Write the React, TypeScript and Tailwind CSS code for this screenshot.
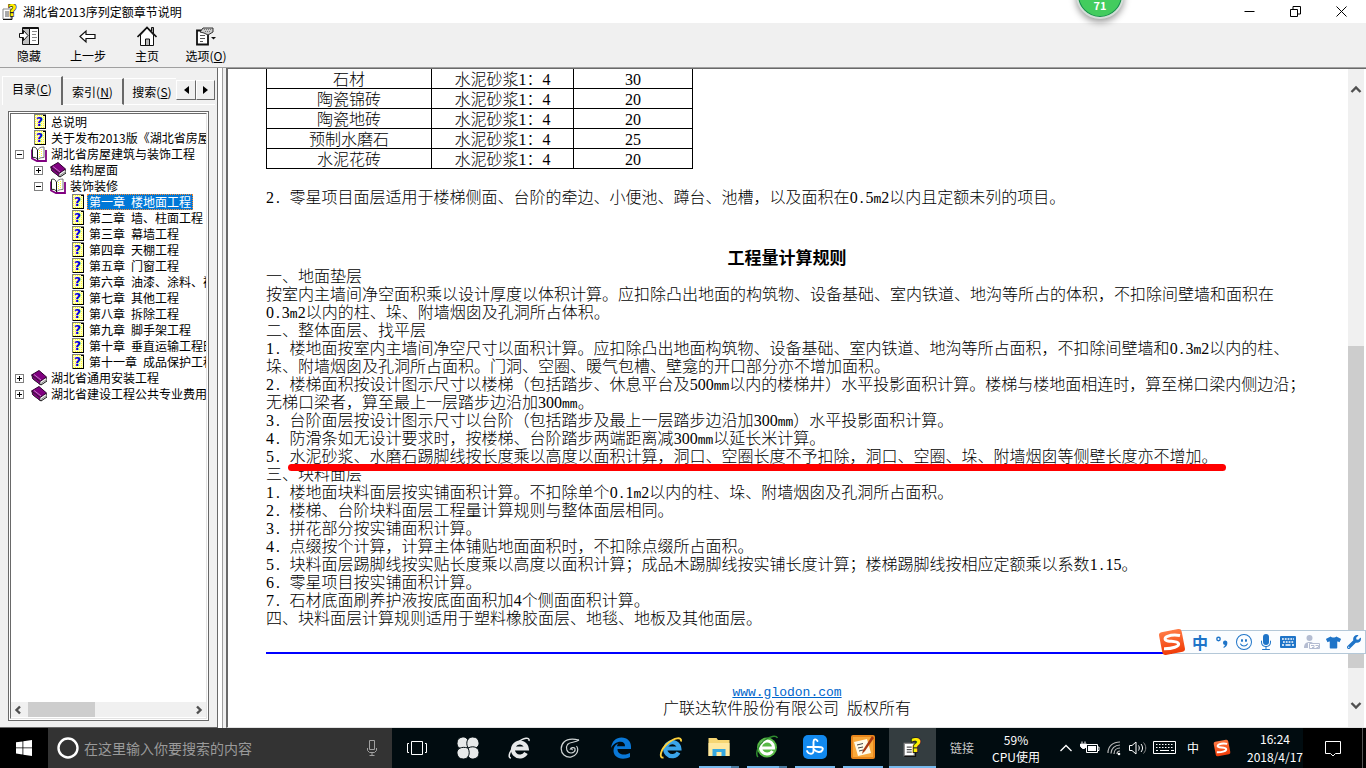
import { useState, type ReactNode } from "react";
import { BsMicFill, BsEmojiSmile } from "react-icons/bs";
import { FaTshirt, FaWrench } from "react-icons/fa";
import clsx from "clsx";

type TreeNode = { label: string; level: number; kind: "topic" | "open" | "closed" };

const tree: TreeNode[] = [
  { label: "总说明", level: 0, kind: "topic" },
  { label: "关于发布2013版《湖北省房屋", level: 0, kind: "topic" },
  { label: "湖北省房屋建筑与装饰工程", level: 0, kind: "open" },
  { label: "结构屋面", level: 1, kind: "closed" },
  { label: "装饰装修", level: 1, kind: "open" },
  { label: "第一章 楼地面工程", level: 2, kind: "topic" },
  { label: "第二章 墙、柱面工程", level: 2, kind: "topic" },
  { label: "第三章 幕墙工程", level: 2, kind: "topic" },
  { label: "第四章 天棚工程", level: 2, kind: "topic" },
  { label: "第五章 门窗工程", level: 2, kind: "topic" },
  { label: "第六章 油漆、涂料、裱", level: 2, kind: "topic" },
  { label: "第七章 其他工程", level: 2, kind: "topic" },
  { label: "第八章 拆除工程", level: 2, kind: "topic" },
  { label: "第九章 脚手架工程", level: 2, kind: "topic" },
  { label: "第十章 垂直运输工程田", level: 2, kind: "topic" },
  { label: "第十一章 成品保护工程", level: 2, kind: "topic" },
  { label: "湖北省通用安装工程", level: 0, kind: "closed" },
  { label: "湖北省建设工程公共专业费用", level: 0, kind: "closed" },
];

const materials = [
  ["石材", "水泥砂浆1：4", "30"],
  ["陶瓷锦砖", "水泥砂浆1：4", "20"],
  ["陶瓷地砖", "水泥砂浆1：4", "20"],
  ["预制水磨石", "水泥砂浆1：4", "25"],
  ["水泥花砖", "水泥砂浆1：4", "20"],
];

const rules = [
  "一、地面垫层",
  "按室内主墙间净空面积乘以设计厚度以体积计算。应扣除凸出地面的构筑物、设备基础、室内铁道、地沟等所占的体积，不扣除间壁墙和面积在\n0.3m2以内的柱、垛、附墙烟囱及孔洞所占体积。",
  "二、整体面层、找平层",
  "1. 楼地面按室内主墙间净空尺寸以面积计算。应扣除凸出地面构筑物、设备基础、室内铁道、地沟等所占面积，不扣除间壁墙和0.3m2以内的柱、\n垛、附墙烟囱及孔洞所占面积。门洞、空圈、暖气包槽、壁龛的开口部分亦不增加面积。",
  "2. 楼梯面积按设计图示尺寸以楼梯（包括踏步、休息平台及500mm以内的楼梯井）水平投影面积计算。楼梯与楼地面相连时，算至梯口梁内侧边沿；\n无梯口梁者，算至最上一层踏步边沿加300mm。",
  "3. 台阶面层按设计图示尺寸以台阶（包括踏步及最上一层踏步边沿加300mm）水平投影面积计算。",
  "4. 防滑条如无设计要求时，按楼梯、台阶踏步两端距离减300mm以延长米计算。",
  "5. *水泥砂浆、水磨石踢脚线按长度乘以高度以面积计算，洞口、空圈长度不予扣除，洞口、空圈、垛、附墙烟囱等侧壁长度亦不增加。",
  "三、块料面层",
  "1. 楼地面块料面层按实铺面积计算。不扣除单个0.1m2以内的柱、垛、附墙烟囱及孔洞所占面积。",
  "2. 楼梯、台阶块料面层工程量计算规则与整体面层相同。",
  "3. 拼花部分按实铺面积计算。",
  "4. 点缀按个计算，计算主体铺贴地面面积时，不扣除点缀所占面积。",
  "5. 块料面层踢脚线按实贴长度乘以高度以面积计算；成品木踢脚线按实铺长度计算；楼梯踢脚线按相应定额乘以系数1.15。",
  "6. 零星项目按实铺面积计算。",
  "7. 石材底面刷养护液按底面面积加4个侧面面积计算。",
  "四、块料面层计算规则适用于塑料橡胶面层、地毯、地板及其他面层。",
];

// Digits and latin letters take half the width of a Chinese character
function Mixed({ text }: { text: string }) {
  return (
    <>
      {text.split(/(\d+|[ .a-z]+)/).map((part, i) => {
        if (/^\d/.test(part)) return <span key={i} className="font-['Liberation_Serif',serif] leading-[0]">{part}</span>;
        if (/^[ .a-z]/.test(part)) return <span key={i} className="whitespace-pre font-['Liberation_Mono',monospace] text-[13px] leading-[0]">{part}</span>;
        return part;
      })}
    </>
  );
}

function Rule({ text }: { text: string }) {
  const [lead, marked] = text.split("*");
  return (
    <p className="whitespace-pre">
      <Mixed text={lead} />
      {marked && (
        <span className="relative">
          <Mixed text={marked} />
          <span className="absolute -left-0.5 -right-2 top-[21px] z-10 h-[7px] rounded-full bg-[#ff0000]" />
        </span>
      )}
    </p>
  );
}

function HelpIcon({ className }: { className?: string }) {
  return (
    <svg viewBox="0 0 16 16" className={className}>
      <path d="M1 5h8v10H1z" fill="#fff" stroke="#888" />
      <path d="M3 8h4M3 10h4M3 12h4" stroke="#555" />
      <path d="M1 15.5h9V6" fill="none" stroke="#111" />
      <text x="6" y="12" fontSize="15" fontWeight="900" fontFamily="DejaVu Sans" fill="#ffee00" stroke="#222" strokeWidth="1.4" paintOrder="stroke">?</text>
    </svg>
  );
}

function TopicIcon() {
  return (
    <svg width="13" height="16" viewBox="0 0 13 16" shapeRendering="crispEdges" className="shrink-0">
      <rect width="12" height="15" fill="#808080" />
      <rect x="1" y="1" width="10" height="13" fill="#ffffc0" />
      <path d="M1.500 1v13M3.500 1v13M5.500 1v13M7.500 1v13M9.500 1v13" stroke="#ffff22" strokeDasharray="1 1" />
      <path d="M11.500 3v12M1 14.500h11M9 1.500h2v2" stroke="#000" fill="none" />
      <text x="2" y="12" fontSize="12" fontWeight="700" fontFamily="DejaVu Sans" fill="#0000e0">?</text>
    </svg>
  );
}

function BookIcon({ open }: { open: boolean }) {
  return open ? (
    <svg width="16" height="16" viewBox="0 0 16 16" className="shrink-0">
      <path d="M1 3.500v9l5 2.500h9V4" fill="none" stroke="#800080" strokeWidth="1.800" />
      <path d="M1.500 1.500c2-1 4 0 5 3v9c-1-2-3-2.500-5-2z" fill="#fff" stroke="#222" />
      <path d="M6.500 4.500c1-2.500 3-3.500 6.500-3.500v10.500c-3 0-5.500.5-6.500 2.500z" fill="#fff" stroke="#777" />
      <path d="M8.500 4v8M10.500 3v8" stroke="#ffff33" strokeDasharray="1 1" />
      <path d="M6.500 4v10" stroke="#111" />
    </svg>
  ) : (
    <svg width="16" height="16" viewBox="0 0 16 16" className="shrink-0">
      <path d="M1 5l1 4 8 6 6-4V8z" fill="#eee" stroke="#111" />
      <path d="M.5 5L8 .5 15.500 7 9 11.500z" fill="#800080" stroke="#300030" />
      <path d="M1 5.500l.5 3 7.500 6v-3z" fill="#800080" stroke="#222" strokeWidth=".6" />
      <path d="M3 4.500L10 10" stroke="#d8a0d8" strokeWidth=".8" />
      <path d="M10 13.500l5-3.500" stroke="#888" />
    </svg>
  );
}

function Expander({ open }: { open: boolean }) {
  return (
    <svg width="9" height="9" viewBox="0 0 9 9" shapeRendering="crispEdges" className="shrink-0">
      <rect x=".5" y=".5" width="8" height="8" fill="#fff" stroke="#808080" />
      <path d={open ? "M2 4.500h5" : "M2 4.500h5M4.500 2v5"} stroke="#000" />
    </svg>
  );
}

function Arrow({ d }: { d: string }) {
  return (
    <svg width="12" height="12" viewBox="0 0 12 12" fill="none" stroke="#505050" strokeWidth="2.4">
      <path d={d} />
    </svg>
  );
}

function SogouLogo({ className }: { className?: string }) {
  return (
    <svg viewBox="0 0 28 28" className={className}>
      <defs>
        <linearGradient id="sogou" x1="0" y1="0" x2="0" y2="1">
          <stop offset="0" stopColor="#ff7a45" />
          <stop offset="1" stopColor="#f03c08" />
        </linearGradient>
      </defs>
      <rect x="2.500" y="2.500" width="23" height="23" rx="3" fill="url(#sogou)" transform="rotate(-11 14 14)" />
      <path d="M22 7.500c-4-.8-9-.6-12.500.8-3.500 1.500-3 4 .5 4.600 4 .6 9.500.2 10.500 2.600 1 3-6 5.300-14.500 5.200" fill="none" stroke="#fff" strokeWidth="3" />
    </svg>
  );
}

const toolbarIcons: { label: ReactNode; icon: ReactNode }[] = [
  {
    label: "隐藏",
    icon: (
      <>
        <path d="M3.500 1.500h16v17h-16z" fill="#fff" stroke="#111" />
        <path d="M4 2h6v16H4z" fill="#c0c0c0" />
        <path d="M10.500 2v16M4 2.500h15" stroke="#111" />
        <path d="M13 5.500h5M13 8.500h4M13 11.500h5M13 14.500h4" stroke="#888" />
        <path d="M.5 7.500h4V4.500l4.500 5-4.500 5v-3h-4z" fill="#fff" stroke="#111" />
      </>
    ),
  },
  { label: "上一步", icon: <path d="M2 10.500l6-5.500v3.500h9v4H8V16z" fill="#fff" stroke="#111" strokeWidth="1.200" /> },
  {
    label: "主页",
    icon: (
      <>
        <path d="M3.500 9v10.500h13V9L10 2z" fill="#fff" stroke="#111" />
        <path d="M.5 11L10 1.500l9.500 9.500" fill="none" stroke="#111" strokeWidth="1.600" />
        <path d="M14.500 5V1.500h2V7" fill="#999" stroke="#111" />
        <path d="M8.500 19v-6h4v6" fill="#bbb" stroke="#111" />
      </>
    ),
  },
  {
    label: <>选项(<u>O</u>)</>,
    icon: (
      <>
        <path d="M1 4.500h11v14H1z" fill="#fff" stroke="#111" strokeWidth="1.800" />
        <path d="M4 9.500h5M4 12.500h5M4 15.500h3" stroke="#555" />
        <path d="M4 6l3-4h10v4l-5 3-4-2z" fill="#ccc" stroke="#333" />
        <path d="M8 3.500h7M9 5.500h5" stroke="#777" strokeDasharray="1 1" />
        <path d="M15 11h5l-2.500 2.500z" fill="#111" />
      </>
    ),
  },
];

function Toolbar() {
  return (
    <div className="flex h-[45px] shrink-0 border-b border-[#a0a0a0] bg-[#f0f0f0]">
      {toolbarIcons.map((t, i) => (
        <button key={i} className="flex w-[59px] flex-col items-center gap-0.5 pr-px pt-[3px] text-xs leading-4">
          <svg width="20" height="20" viewBox="0 0 20 20">{t.icon}</svg>
          <span>{t.label}</span>
        </button>
      ))}
    </div>
  );
}

function Sidebar() {
  const [selected, setSelected] = useState("第一章 楼地面工程");
  return (
    <aside className="flex w-[218px] shrink-0 flex-col border-b border-r border-[#696969] bg-[#f0f0f0] px-0.5 pt-2 text-xs">
      <div role="tablist" className="flex h-[29px] shrink-0 items-end overflow-hidden">
        <button role="tab" aria-selected="true" className="h-[29px] w-[61px] border-l border-r-2 border-t border-l-white border-r-[#696969] border-t-white pb-1">目录(<u>C</u>)</button>
        <button role="tab" className="h-[27px] w-[61px] border-b border-r-2 border-t border-b-white border-r-[#696969] border-t-white">索引(<u>N</u>)</button>
        <button role="tab" className="h-[27px] w-[52px] whitespace-nowrap border-b border-t border-white pl-1">搜索(<u>S</u>)</button>
        <div className="flex h-[25px] grow border-b border-white">
          {["M11 3v8l-5-4z", "M6 3v8l5-4z"].map((d, i) => (
            <button key={d} aria-label={i ? "下一个" : "上一个"} className="h-5 grow border-b border-l border-r border-t border-b-[#696969] border-l-white border-r-[#696969] border-t-white">
              <svg width="16" height="14" viewBox="0 0 16 14" className="mx-auto"><path d={d} fill="#000" /></svg>
            </button>
          ))}
        </div>
      </div>
      <div className="mx-1.5 my-1.5 flex min-h-0 grow flex-col border border-[#696969] bg-white p-px">
        <div className="flex min-h-0 grow flex-col border border-b-[#e3e3e3] border-l-[#696969] border-r-[#e3e3e3] border-t-[#696969]">
          <ul className="grow overflow-hidden text-xs leading-4">
            {tree.map((n) => (
              <li key={n.label} className={clsx("flex h-4 items-center", n.level === 0 && "pl-1", n.level === 1 && "pl-[23px]", n.level === 2 && "pl-[42px]")}>
                <span className="flex w-3.5 shrink-0">{n.kind !== "topic" && <Expander open={n.kind === "open"} />}</span>
                <button onClick={() => setSelected(n.label)} className="flex items-center whitespace-nowrap">
                  <span className={clsx("flex w-5", n.kind === "topic" ? "pl-[5px]" : "pl-0.5")}>
                    {n.kind === "topic" ? <TopicIcon /> : <BookIcon open={n.kind === "open"} />}
                  </span>
                  <span className={clsx("h-4 border border-dotted px-px leading-[14px]", selected === n.label ? "border-[#ff8728] bg-[#0078d7] text-white" : "border-transparent")}>
                    {n.label.split(" ").map((part, i) => <span key={part} className={clsx(i > 0 && "ml-1.5")}>{part}</span>)}
                  </span>
                </button>
              </li>
            ))}
          </ul>
          <div className="mb-px flex h-[15px] shrink-0 items-center gap-0.5 bg-[#f0f0f0] px-px">
            <Arrow d="M8 2.500L4.500 6 8 9.500" />
            <span className="ml-0.5 h-[15px] w-[67px] bg-[#cdcdcd]" />
            <span className="ml-auto"><Arrow d="M4 2.500L7.500 6 4 9.500" /></span>
          </div>
        </div>
      </div>
    </aside>
  );
}

function Document() {
  return (
    <div className="flex min-w-0 grow border-b border-l-2 border-t border-b-[#e3e3e3] border-l-[#696969] border-t-[#696969] bg-white">
      <main className="min-w-0 grow overflow-hidden pl-[38px] pr-10 text-base leading-[18px] text-black">
        <table className="-mt-px table-fixed border-collapse text-center font-light">
          <colgroup>
            <col className="w-[165px]" />
            <col className="w-[142px]" />
            <col className="w-[119px]" />
          </colgroup>
          <tbody>
            {materials.map((row) => (
              <tr key={row[0]} className="h-5">
                {row.map((cell, i) => (
                  <td key={i} className="border border-t-0 border-black p-0"><Mixed text={cell} /></td>
                ))}
              </tr>
            ))}
          </tbody>
        </table>
        <p className="mt-[18px] whitespace-nowrap font-light">
          <Mixed text="2. 零星项目面层适用于楼梯侧面、台阶的牵边、小便池、蹲台、池槽，以及面积在0.5m2以内且定额未列的项目。" />
        </p>
        <h2 className="mt-[43px] text-center text-[17px] font-bold leading-[18px]">工程量计算规则</h2>
        <div className="font-light">
          {rules.map((r) => <Rule key={r} text={r} />)}
        </div>
        <hr className="mt-[26px] border-t-2 border-[#0000ff]" />
        <footer className="mt-[26px] text-center font-light">
          <a href="http://www.glodon.com" className="block text-[#0066cc] underline"><Mixed text="www.glodon.com" /></a>
          <p><Mixed text="广联达软件股份有限公司 版权所有" /></p>
        </footer>
      </main>
      <div className="mr-0.5 flex w-4 shrink-0 flex-col items-center bg-[#f0f0f0] pb-4 pt-[15px]">
        <Arrow d="M1.500 8L6 3.500 10.500 8" />
        <span className="grow-[250] basis-0" />
        <span className="w-4 grow-[321] basis-0 bg-[#cdcdcd]" />
        <span className="grow-[31] basis-0" />
        <Arrow d="M1.500 4L6 8.500 10.500 4" />
      </div>
    </div>
  );
}

function ImeBar() {
  return (
    <div className="absolute bottom-[112px] right-0 z-20 flex items-center">
      <SogouLogo className="z-10 -mr-3.5 size-7" />
      <div className="flex h-6 items-center border border-[#b4c8d8] bg-[#fbfdff] pl-4 text-[#1e74c8]">
        <span className="flex w-[22px] justify-center text-base font-bold leading-5">中</span>
        <span className="flex w-[22px] justify-center">
          <svg width="14" height="14" viewBox="0 0 14 14"><circle cx="3.500" cy="4" r="1.700" fill="none" stroke="currentColor" strokeWidth="1.400" /><path d="M8 7.500a2.200 2.200 0 1 1 4.400.3c0 2.500-1.200 4.200-3.600 5.200l-.4-1c1-.6 1.500-1.300 1.600-2A2.200 2.200 0 0 1 8 7.500z" fill="currentColor" /></svg>
        </span>
        <span className="flex w-[22px] justify-center"><BsEmojiSmile size={16} /></span>
        <span className="flex w-[22px] justify-center"><BsMicFill size={16} /></span>
        <span className="flex w-[22px] justify-center">
          <svg width="16" height="12" viewBox="0 0 16 12"><rect width="16" height="12" rx="1" fill="currentColor" /><path d="M2 3h12M3 6h11" stroke="#fff" strokeWidth="1.500" strokeDasharray="1.800 1" /><path d="M2 9h2M5.500 9h5M12 9h2" stroke="#fff" strokeWidth="1.500" /></svg>
        </span>
        <span className="flex w-[25px] justify-center">
          <svg width="18" height="16" viewBox="0 0 18 16" fill="#b4bdd2"><circle cx="6.500" cy="4" r="3" /><path d="M1 14c0-4 2-6 5.500-6 2 0 3 .5 3.500 1H5v5z" /><path d="M6.500 9.500h10v5h-10zM8 11.500h3v2H9M12.500 11.500h3v2h-2" fill="#fff" stroke="#b4bdd2" /></svg>
        </span>
        <span className="flex w-[18px] justify-center"><FaTshirt size={15} /></span>
        <span className="flex w-[23px] justify-center"><FaWrench size={14} /></span>
      </div>
    </div>
  );
}

const pinned: { name: string; icon: ReactNode }[] = [
  { name: "任务视图", icon: <path d="M6.500 5.500h11v13h-11zM4 7.500H2.500v9H4M20 7.500h1.500v9H20" fill="none" stroke="#fff" /> },
  {
    name: "四叶草",
    icon: (
      <g fill="#e8eaea" stroke="#020c10">
        <path d="M12 12C6 15 1 12 1 7.500S4 1 7.500 1 14 5 12 12z" />
        <path d="M12 12C9 6 12 1 16.500 1S23 4 23 7.500 19 14 12 12z" />
        <path d="M12 12c6-3 11 0 11 4.500S20 23 16.500 23 10 19 12 12z" />
        <path d="M12 12c3 6 0 11-4.500 11S1 20 1 16.500 5 10 12 12z" />
      </g>
    ),
  },
  {
    name: "浏览器",
    icon: (
      <g fill="none" stroke="#e8eaea">
        <path d="M19 17a7 7 0 1 1 .8-4.500H8" strokeWidth="4" />
        <path d="M4 22c-4 0-1-9 6-15S23 1 22 5" strokeWidth="1.500" />
      </g>
    ),
  },
  {
    name: "搜狗浏览器",
    icon: (
      <g fill="none" stroke="#cfd4d4" strokeWidth="1.200">
        <path d="M21 4c-4 3-9 1.500-11.500 4.500C7 12 9 17 13 17c3 0 4.500-2 4-4.500-1-1.500-4-1-4.500.5 1.500-.5 2 .5 1.500 1.200" />
        <path d="M21 4C15 2.500 9 3 6 6c-4 4-3.500 10 0 13 4 3.500 10 2.500 12.500-1.500 1.500-2.500 1.500-5.500 0-7.500" />
      </g>
    ),
  },
  {
    name: "Edge",
    icon: <path d="M2 12C3 5 7 1.500 12.500 1.500c6 0 9.500 4 9.500 9V13H8.500c0 4 3 5.500 6.500 5.500 2.500 0 4.500-.7 6-1.500v4c-2 1.200-4.500 1.700-7 1.700-6 0-9.500-3.500-9.500-8.200 0-3.500 2-6 5-7.200-1 1-1.500 2-1.500 3h8c0-3-1.500-4.500-4.500-4.500C7.500 5.800 4 8.500 2 12z" fill="#0a78d7" />,
  },
  {
    name: "Internet Explorer",
    icon: (
      <g fill="none">
        <path d="M19.500 16.500a7 7 0 1 1 .8-4H8" stroke="#3aa5ea" strokeWidth="4.200" />
        <path d="M4.500 21.500c-5 1-3-8 4-14S23 .5 22 5.500" stroke="#ffd23c" strokeWidth="1.900" />
      </g>
    ),
  },
];

const running: { name: string; icon: ReactNode }[] = [
  {
    name: "文件资源管理器",
    icon: (
      <>
        <path d="M1.500 3h8l1.500 2h11.500v16h-21z" fill="#f6d673" />
        <path d="M1.500 8h21v13h-21z" fill="#ffe9a0" />
        <path d="M5.500 21v-7h13v7h-4v-4h-5v4z" fill="#35a8e0" />
      </>
    ),
  },
  {
    name: "360浏览器",
    icon: (
      <>
        <circle cx="12" cy="12.500" r="10" fill="#58b947" />
        <path d="M17.500 16a6.500 6.500 0 1 1 1-3H6" fill="none" stroke="#fff" strokeWidth="3" />
        <path d="M3 22C0 19 3 10 9 5.500S21 0 22.500 3" fill="none" stroke="#2e8b2e" strokeWidth="1.500" />
      </>
    ),
  },
  {
    name: "广联达",
    icon: (
      <>
        <rect width="24" height="24" rx="5" fill="#1289ee" />
        <path d="M14.500 6c-1.500-2.500-4-2-4 1v9c0 4-5 3.500-6.500 0M4.500 12h11c4 0 5 1 4 3-1.500 3-6 2.500-9-1" fill="none" stroke="#fff" strokeWidth="1.900" strokeLinecap="round" />
      </>
    ),
  },
  {
    name: "笔记",
    icon: (
      <>
        <rect width="24" height="24" rx="2" fill="#e8861b" />
        <path d="M2 2h20v20H2z" fill="#f9a93a" />
        <path d="M3 7l13-3 4 14-13 3z" fill="#fffbe8" />
        <path d="M6 10l6-1.500M7 13l5-1M8 16l4-1" stroke="#444" />
        <path d="M21 1L12 15l-1 4 3-3 9-13z" fill="#a83a12" />
      </>
    ),
  },
];

function Taskbar() {
  return (
    <footer className="flex h-10 shrink-0 items-stretch bg-[#010c10] text-xs text-white">
      <button aria-label="开始" className="flex w-12 shrink-0 items-center justify-center bg-black">
        <svg width="16" height="16" viewBox="0 0 16 16" fill="#fff"><path d="M0 2.300L6.500 1.400v6.100H0zM7.300 1.300L16 0v7.500H7.300zM0 8.300h6.500v6.200L0 13.600zM7.300 8.300H16V16l-8.700-1.300z" /></svg>
      </button>
      <label className="flex w-[344px] shrink-0 items-center bg-[#333333] pl-2 pr-3">
        <svg width="24" height="24" viewBox="0 0 24 24"><circle cx="12" cy="12" r="9.500" fill="none" stroke="#fff" strokeWidth="2.400" /></svg>
        <input aria-label="搜索" placeholder="在这里输入你要搜索的内容" className="ml-1 min-w-0 grow bg-transparent text-sm outline-none placeholder:text-[#9a9a9a]" />
        <svg width="16" height="18" viewBox="0 0 16 18" fill="none" stroke="#a0a0a0" className="shrink-0"><path d="M5.500 1.500h5v9h-5zM3.500 9v2.500l2 2h5l2-2V9M8 13.500v3M5.500 16.500h5" /></svg>
      </label>
      {pinned.map((p, i) => (
        <button key={p.name} aria-label={p.name} className={clsx("flex shrink-0 items-center justify-center", i === 5 ? "w-12" : "w-[51px] pr-0.5")}>
          <svg width="24" height="24" viewBox="0 0 24 24">{p.icon}</svg>
        </button>
      ))}
      {running.map((p, i) => (
        <button key={p.name} aria-label={p.name} className="flex w-12 shrink-0 flex-col items-center">
          <svg width="24" height="24" viewBox="0 0 24 24" className="my-auto">{p.icon}</svg>
          <span className={clsx("h-0.5 w-10 bg-[#76b9ed]", i < 2 && "border-r-8 border-[#4a7ba0]")} />
        </button>
      ))}
      <button aria-label="帮助" className="ml-0.5 flex w-[47px] shrink-0 flex-col items-center border-b-2 border-[#76b9ed] bg-[#343d40]">
        <HelpIcon className="my-auto size-5" />
      </button>
      <div className="flex grow items-center justify-end">
        <span className="mr-[18px] text-[#c8c8c8]">链接</span>
        <div className="mr-4 text-center leading-[17px]">59%<br />CPU使用</div>
        <svg width="20" height="16" viewBox="0 0 20 16" fill="none" stroke="#fff" strokeWidth="1.300"><path d="M4.500 11L10 5.500l5.500 5.500" /></svg>
        <svg width="26" height="16" viewBox="0 0 26 16"><path d="M10.500 4.500h11v8h-11zM21.500 7H23v3.500h-1.500" fill="none" stroke="#fff" /><path d="M12 6h8v5h-8z" fill="#fff" /><path d="M6 1.500v2M9 1.500v2M4.500 4h6v2.500l-2 2h-2l-2-2z" fill="#fff" stroke="#fff" /></svg>
        <svg width="24" height="18" viewBox="0 0 24 18" fill="none" stroke="#bbb" strokeWidth="1.200" className="ml-px"><path d="M5 14C5 7 10 3 17 3M8 14.500c0-5 4-8.500 9-8.500M11 15c0-3.500 2.500-6 6-6M14 15c0-1.500 1-3 3-3" /><circle cx="16" cy="15" r="1.300" fill="#fff" stroke="none" /></svg>
        <svg width="22" height="16" viewBox="0 0 22 16" fill="none" stroke="#fff"><path d="M2.500 5.500H5l4-3.500v12l-4-3.500H2.500zM11.500 5.500c1 1.500 1 3.500 0 5M14 4c2 2.500 2 5.500 0 8" /><path d="M16.500 2.500c3 3.500 3 7.500 0 11" stroke="#888" /></svg>
        <svg width="24" height="14" viewBox="0 0 24 14" className="ml-1"><path d="M.5.5h22v12H.5z" fill="none" stroke="#fff" /><path d="M3 3.500h18M3 6.500h18" stroke="#fff" strokeDasharray="1.500 1.500" /><path d="M3 9.500h2M7 9.500h9M18 9.500h3" stroke="#fff" /></svg>
        <span className="ml-2.5">中</span>
        <SogouLogo className="ml-3.5 size-[18px]" />
        <div className="ml-4 text-center leading-[18px]">16:24<br />2018/4/17</div>
      </div>
      <button aria-label="通知" className="flex w-[60px] shrink-0 items-center justify-center border-r border-[#555] bg-black">
        <svg width="18" height="17" viewBox="0 0 18 17" fill="none" stroke="#fff"><path d="M1.500 1.500h15v12h-5L9 16l-2.500-2.500h-5z" /></svg>
      </button>
      <span className="w-[3px] shrink-0 bg-black" />
    </footer>
  );
}

export default function App() {
  return (
    <div className="relative flex h-screen flex-col overflow-hidden bg-white font-['Noto_Sans_CJK_SC',sans-serif] text-black">
      <header className="flex h-[23px] shrink-0 items-center pl-0.5 text-xs">
        <HelpIcon className="mr-[5px] size-4" />
        <h1>湖北省2013序列定额章节说明</h1>
        <div className="ml-auto mr-0.5 flex">
          {["M.5 5.500h10", "M.5 3.500h7v7h-7zM3 3V.5h7.500V8H8", "M.5.500l10 10M10.500.500l-10 10"].map((d, i) => (
            <button key={d} aria-label={["最小化", "还原", "关闭"][i]} className="flex w-[46px] justify-center">
              <svg width="11" height="11" viewBox="0 0 11 11" fill="none" stroke="#000"><path d={d} /></svg>
            </button>
          ))}
        </div>
      </header>
      <Toolbar />
      <div className="flex min-h-0 grow bg-[#f0f0f0]">
        <Sidebar />
        <div className="w-1 shrink-0 bg-white" />
        <div className="w-1 shrink-0 border-l border-[#a0a0a0]" />
        <Document />
      </div>
      <Taskbar />
      <div className="absolute -top-[29px] right-[242px] z-20 flex size-12 items-end justify-center rounded-full border-2 border-[#d4dcd8] bg-[#43cc5e] pb-1 text-[11px] font-bold leading-4 text-white shadow-[inset_0_0_0_1px_#178a50,0_3px_7px_#0006]">71</div>
      <ImeBar />
    </div>
  );
}
